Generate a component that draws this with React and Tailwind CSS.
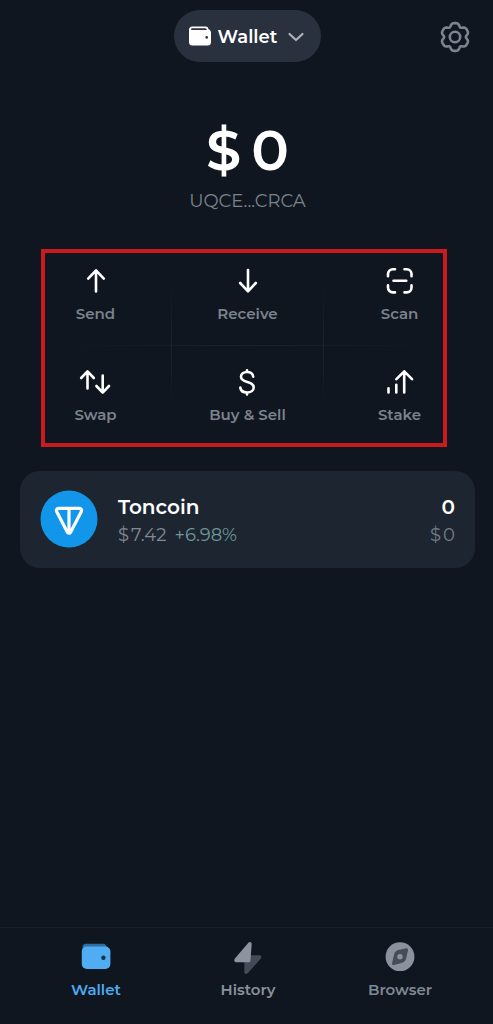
import React from "react";

const strokeProps = {
  fill: "none",
  stroke: "currentColor",
  strokeWidth: 2.6,
  strokeLinecap: "round",
  strokeLinejoin: "round",
};

// Outline of the six-lobed gear, centred on (17, 17): broad lobes, narrow notches.
const gearPoints = Array.from({ length: 120 }, (_, i) => {
  const angle = (i * Math.PI) / 60;
  const radius = 12.8 + 1.5 * Math.cos(6 * angle) - 0.45 * Math.cos(12 * angle);
  return `${(17 + radius * Math.sin(angle)).toFixed(2)},${(17 - radius * Math.cos(angle)).toFixed(2)}`;
}).join(" ");

const send = { label: "Send", icon: <path d="M15 25.5V4.5M7.2 12.6 15 4.3l7.8 8.3" /> };
const receive = { label: "Receive", icon: <path d="M15 4v21M7.2 17 15 25.3 22.8 17" /> };
const scan = {
  label: "Scan",
  icon: (
    <path d="M3 10.2V8a4.8 4.8 0 0 1 4.8-4.8H10M19.5 3.2h2.2A4.8 4.8 0 0 1 26.5 8v2.2M26.5 19.4v2.2a4.8 4.8 0 0 1-4.8 4.8h-2.2M10 26.4H7.8a4.8 4.8 0 0 1-4.8-4.8v-2.2M8.5 14.7h12.8" />
  ),
};
const swap = {
  label: "Swap",
  icon: <path d="M7.5 21.5V4.5M1.2 11l6.3-6.6 6.3 6.6M22.7 8.5V25.5M16.4 19l6.3 6.6 6.3-6.6" />,
};
const trade = {
  label: "Buy & Sell",
  icon: (
    <path d="M21.2 9.6C20.8 6.8 18.4 5 15 5c-3.5 0-6 1.9-6 4.8 0 6.9 12.7 3.6 12.7 10.6 0 3-2.8 5.1-6.6 5.1-3.9 0-6.5-2-6.8-5M15 3.2V5M15 25.5v1.9" />
  ),
};
const stake = {
  label: "Stake",
  icon: <path d="M4.5 21.3V25.5M12.3 17.8v7.7M20.2 25.5V4.5M12.4 12.2l7.8-7.9 7.8 7.9" />,
};

function Action({ action }) {
  return (
    <button type="button" className="flex flex-col items-center gap-1.5 justify-self-center pt-[21px] pb-[19px]">
      <svg viewBox="0 0 30 30" className="size-[30px] overflow-visible text-white" aria-hidden="true" {...strokeProps}>
        {action.icon}
      </svg>
      <span className="text-[15px] leading-6 font-semibold text-[#7b838d]">{action.label}</span>
    </button>
  );
}

function ActionRow({ items, divider }) {
  return (
    <div className="grid grid-cols-[1fr_1px_1fr_1px_1fr]">
      <Action action={items[0]} />
      <div className={divider} />
      <Action action={items[1]} />
      <div className={divider} />
      <Action action={items[2]} />
    </div>
  );
}

function Actions() {
  return (
    <section aria-label="Actions" className="relative mt-8">
      <ActionRow items={[send, receive, scan]} divider="mt-10 bg-linear-to-b from-transparent to-[#1b2430]" />
      <div className="mx-10 h-px bg-linear-to-r from-transparent via-[#19222e] to-transparent" />
      <ActionRow items={[swap, trade, stake]} divider="mb-10 bg-linear-to-t from-transparent to-[#1b2430]" />
      <div className="pointer-events-none absolute top-1 right-7 -bottom-px left-[21px] border-4 border-[#c91a1d]" />
    </section>
  );
}

function TonLogo() {
  return (
    <svg viewBox="0 0 58 58" className="size-[58px] shrink-0" role="img" aria-label="TON">
      <circle cx="29" cy="29" r="28.5" fill="#1296ea" />
      <path
        d="M18.6 18.3h20.8c1.9 0 2.7 1.9 1.7 3.6L30.6 42.3c-.7 1.3-2.5 1.3-3.2 0L16.9 21.9c-1-1.7-.2-3.6 1.7-3.6ZM29 18.5v23"
        fill="none"
        stroke="#fff"
        strokeWidth="3.2"
        strokeLinejoin="round"
      />
    </svg>
  );
}

const tabs = [
  {
    label: "Wallet",
    color: "text-[#4eaaee]",
    icon: (
      <>
        <path d="M5 1.8h17a3.5 3.5 0 0 1 3.5 3.5V10H1.5V5.3A3.5 3.5 0 0 1 5 1.8Z" fill="#2b6fa4" />
        <rect x=".8" y="4.5" width="28.6" height="22.5" rx="5" fill="#51adf2" />
        <circle cx="22.4" cy="15.8" r="2.2" fill="#17304a" />
      </>
    ),
  },
  {
    label: "History",
    color: "text-[#8a929d]",
    icon: (
      <>
        <path d="M14 13.3h12c2.5 0 3 1.8 1.7 3.5L14.9 31c-1.6 1.6-3.6 1-3.6-1.2V17Z" fill="#444b58" />
        <path d="M2.1 16.2 15.2.9c1.5-1.6 3.5-.8 3.5 1l-1.2 16c-.1 1.6-.8 2.3-2.2 2.3H3.7c-2.4 0-3.2-2.2-1.6-4Z" fill="#8c949f" />
      </>
    ),
  },
  {
    label: "Browser",
    color: "text-[#7f8893]",
    icon: (
      <>
        <circle cx="15" cy="14.7" r="14.4" fill="#8a929d" />
        <path d="M12.4 8.2 21 6.2c1.5-.3 2.3.6 2 2L21 17c-.2.9-.6 1.6-1.4 2.3L18 20.6 9.2 22.9c-1.6.4-2.5-.5-2.1-2l2.1-8.9c.2-.8.6-1.5 1.3-2.2Z" fill="#454d59" />
        <circle cx="15" cy="14.7" r="2.7" fill="#8a929d" />
      </>
    ),
  },
];

export default function App() {
  return (
    <div className="flex min-h-screen flex-col bg-[#101620] font-['Montserrat','Inter',sans-serif] text-white">
      <main className="flex-1 pr-[18px] pl-5">
        <header className="grid grid-cols-[1fr_auto_1fr] items-center pt-2.5">
          <button type="button" className="col-start-2 flex h-13 items-center gap-1.5 rounded-full bg-[#2a313e] pr-4 pl-3.5">
            <svg viewBox="0 0 24 22" className="h-[22px] w-6" aria-hidden="true">
              <path
                fillRule="evenodd"
                fill="#fff"
                d="M4.5 1.5h13a3 3 0 0 1 3 2.7c1.5.4 2.5 1.7 2.5 3.3v9.5a3.5 3.5 0 0 1-3.5 3.5h-15A3.5 3.5 0 0 1 1 17V5a3.5 3.5 0 0 1 3.5-3.5ZM3 4.1c0 .5.4.9 1 .9h14.8c0-1-.7-1.7-1.6-1.7H4.3C3.5 3.3 3 3.6 3 4.1Zm15.7 7a1.3 1.3 0 1 0 0 2.6 1.3 1.3 0 0 0 0-2.6Z"
              />
            </svg>
            <span className="pt-px text-lg leading-6 font-semibold">Wallet</span>
            <svg viewBox="0 0 18 18" className="ml-1 size-[18px] text-[#aeb4bc]" aria-hidden="true" {...strokeProps} strokeWidth={2.2}>
              <path d="M2.5 7 9 13l6.500-6" />
            </svg>
          </button>
          <button type="button" aria-label="Settings" className="mr-[3px] justify-self-end pt-px text-[#7c848f]">
            <svg viewBox="0 0 34 34" className="size-[34px]" {...strokeProps}>
              <polygon points={gearPoints} />
              <circle cx="17" cy="17" r="5.2" />
            </svg>
          </button>
        </header>

        <section aria-label="Balance" className="mt-14 flex flex-col items-center">
          <h1 className="flex gap-2.5 text-[56px] leading-16 font-semibold">
            <span>$</span>
            <span>0</span>
          </h1>
          <button type="button" className="mt-[7px] text-lg leading-6 text-[#7b838e]">
            UQCE...CRCA
          </button>
        </section>

        <Actions />

        <button type="button" className="mt-[25px] flex w-full items-center gap-5 rounded-[20px] bg-[#1d2630] px-5 pt-[18px] pb-[19px] text-left">
          <TonLogo />
          <span className="min-w-0 flex-1 pt-1">
            <span className="block text-xl leading-7 font-semibold">Toncoin</span>
            <span className="flex gap-2 text-lg leading-7 text-[#818993]">
              <span className="flex gap-0.5">
                <span>$</span>
                <span>7.42</span>
              </span>
              <span className="text-[#71979b]">+6.98%</span>
            </span>
          </span>
          <span className="pt-1 text-right">
            <span className="block text-xl leading-7 font-semibold">0</span>
            <span className="flex justify-end gap-0.5 text-lg leading-7 text-[#757d87]">
              <span>$</span>
              <span>0</span>
            </span>
          </span>
        </button>
      </main>

      <nav aria-label="Main" className="grid grid-cols-3 border-t border-[#171f2b] pt-3.5 pr-[17px] pb-[22px] pl-5">
        {tabs.map((t) => (
          <a key={t.label} href="#" className={"flex flex-col items-center gap-1.5 " + t.color}>
            <svg viewBox="0 0 30 30" className="size-[30px] overflow-visible" aria-hidden="true">
              {t.icon}
            </svg>
            <span className="text-[15px] leading-6 font-semibold">{t.label}</span>
          </a>
        ))}
      </nav>
    </div>
  );
}
